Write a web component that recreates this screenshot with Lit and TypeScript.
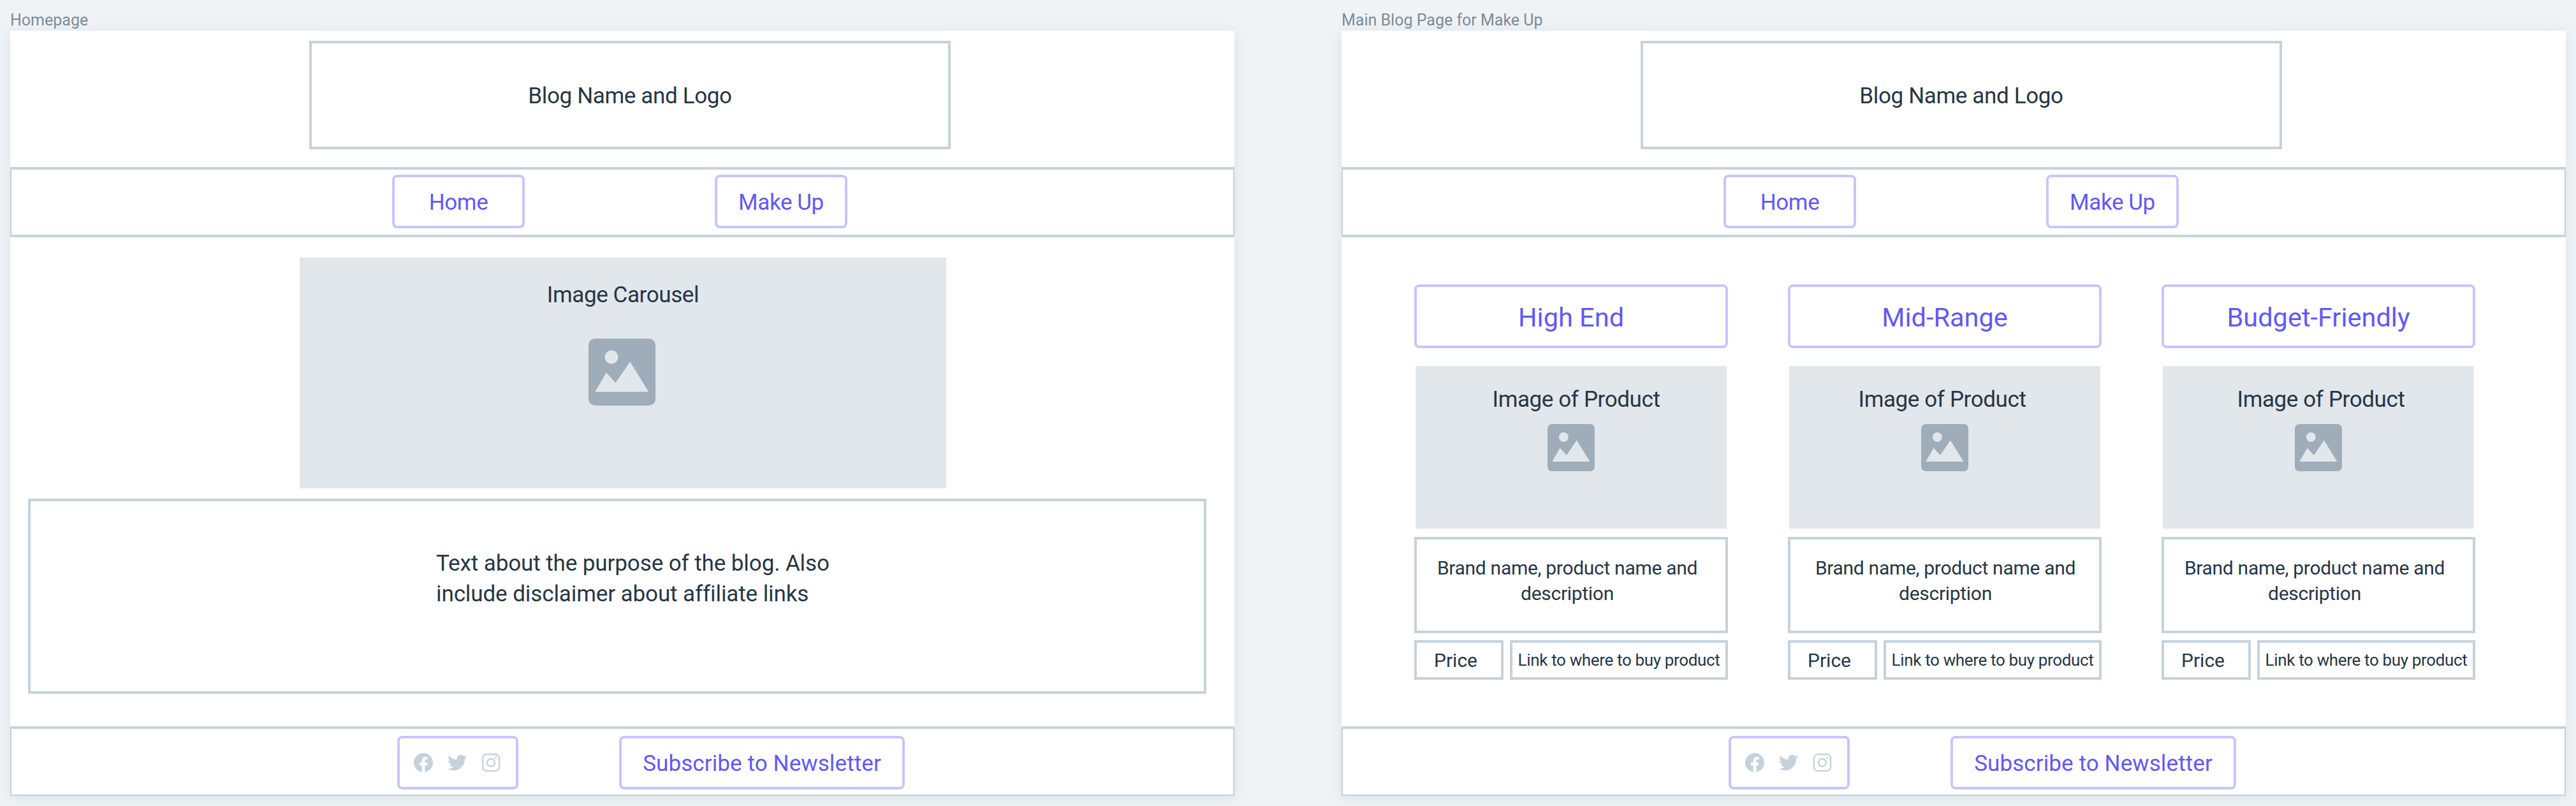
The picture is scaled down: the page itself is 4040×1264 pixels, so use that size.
import { LitElement, html, css, svg } from 'lit';
import { customElement } from 'lit/decorators.js';

interface Column {
  title: string;
  imageShift: number;
  brandShift: number;
}

const COLUMNS: Column[] = [
  { title: 'High End', imageShift: 16, brandShift: -12 },
  { title: 'Mid-Range', imageShift: -8, brandShift: 2 },
  { title: 'Budget-Friendly', imageShift: 8, brandShift: -12 },
];

const placeholderIcon = (size: number) => html`
  <svg class="placeholder" width=${size} height=${size} viewBox="0 0 105 105">
    <rect width="105" height="105" rx="10" fill="#9fadba"></rect>
    <circle cx="36" cy="29" r="10.5" fill="#e2e7eb"></circle>
    <path d="M11 83 28 54 42.5 70 65 37 93.5 83Z" fill="#e2e7eb" stroke="#e2e7eb" stroke-width="1" stroke-linejoin="round"></path>
  </svg>
`;

const facebook = svg`<path d="M24 12.073c0-6.627-5.373-12-12-12s-12 5.373-12 12c0 5.99 4.388 10.954 10.125 11.854v-8.385H7.078v-3.47h3.047V9.43c0-3.007 1.792-4.669 4.533-4.669 1.312 0 2.686.235 2.686.235v2.953H15.83c-1.491 0-1.956.925-1.956 1.874v2.25h3.328l-.532 3.47h-2.796v8.385C19.612 23.027 24 18.062 24 12.073z"></path>`;
const twitter = svg`<path d="M23.953 4.57a10 10 0 01-2.825.775 4.958 4.958 0 002.163-2.723c-.951.555-2.005.959-3.127 1.184a4.92 4.92 0 00-8.384 4.482C7.69 8.095 4.067 6.13 1.64 3.162a4.822 4.822 0 00-.666 2.475c0 1.71.87 3.213 2.188 4.096a4.904 4.904 0 01-2.228-.616v.06a4.923 4.923 0 003.946 4.827 4.996 4.996 0 01-2.212.085 4.936 4.936 0 004.604 3.417 9.867 9.867 0 01-6.102 2.105c-.39 0-.779-.023-1.17-.067a13.995 13.995 0 007.557 2.209c9.053 0 13.998-7.496 13.998-13.985 0-.21 0-.42-.015-.63A9.935 9.935 0 0024 4.59z"></path>`;

@customElement('app-root')
export class AppRoot extends LitElement {
  static styles = css`
    :host {
      display: block;
      width: 4040px;
      height: 1264px;
      overflow: hidden;
      background: #eff3f6;
      font-family: 'Roboto', 'Liberation Sans', sans-serif;
      color: #263645;
    }
    * { box-sizing: border-box; }
    .canvas {
      display: flex;
      gap: 168px;
      padding: 16px 16px 0;
    }
    .frame-label {
      height: 32px;
      font-size: 25px;
      line-height: 32px;
      color: #7c8b98;
    }
    .frame {
      display: flex;
      flex-direction: column;
      width: 1920px;
      height: 1200px;
      background: #fff;
      box-shadow: 0 4px 20px rgba(120, 135, 150, 0.16);
    }
    .logo-row {
      height: 214px;
      padding: 16px 0 0 469px;
    }
    .logo {
      display: flex;
      align-items: center;
      justify-content: center;
      width: 1006px;
      height: 170px;
      padding-top: 2px;
      font-size: 35px;
      letter-spacing: -0.35px;
    }
    .line {
      border: 4px solid #c5d2dc;
    }
    .bar {
      display: flex;
      border: solid #c5d2dc;
      border-width: 4px 2px;
    }
    .nav {
      height: 110px;
      gap: 298px;
      padding: 8px 0 0 597px;
    }
    .footer {
      height: 109px;
      gap: 158px;
      padding: 11px 0 0 605px;
      border-bottom-width: 2px;
    }
    .btn {
      display: flex;
      align-items: center;
      justify-content: center;
      height: 84px;
      padding-top: 2px;
      border: 4px solid #c8c5fb;
      border-radius: 8px;
      color: #6258f6;
      font-size: 35px;
      letter-spacing: -0.4px;
    }
    .home { width: 208px; }
    .social { width: 190px; gap: 23px; padding: 0 3px 0 0; color: #c5d2dc; }
    .social svg { fill: currentColor; display: block; }
    .subscribe { width: 448px; letter-spacing: 0.1px; }
    .content {
      flex: 1;
      min-height: 0;
    }
    .carousel {
      display: flex;
      flex-direction: column;
      align-items: center;
      width: 1014px;
      height: 362px;
      margin: 32px 0 0 454px;
      padding-top: 37px;
      background: #e2e7eb;
      font-size: 35px;
      letter-spacing: -0.4px;
      line-height: 44px;
    }
    .carousel .placeholder {
      margin: 46px 4px 0 0;
    }
    .about {
      width: 1848px;
      height: 306px;
      margin: 16px 0 0 28px;
      padding: 74px 0 0 636px;
      font-size: 35px;
      letter-spacing: -0.1px;
      line-height: 48px;
    }
    .columns {
      display: flex;
      gap: 94px;
      padding: 74px 0 0 114px;
    }
    .column {
      display: flex;
      flex-direction: column;
      width: 492px;
    }
    .col-head {
      height: 100px;
      font-size: 41.5px;
      letter-spacing: 0;
    }
    .product-image {
      display: flex;
      flex-direction: column;
      align-items: center;
      height: 255px;
      margin: 28px 2px 0;
      padding-top: 31px;
      background: #e2e7eb;
      font-size: 35px;
      letter-spacing: -0.4px;
      line-height: 44px;
    }
    .product-image .placeholder {
      margin-top: 16px;
    }
    .brand {
      height: 151px;
      margin-top: 13px;
      padding-top: 25px;
      font-size: 30px;
      letter-spacing: -0.3px;
      line-height: 40px;
      text-align: center;
    }
    .buy {
      display: flex;
      gap: 10px;
      height: 62px;
      margin-top: 11px;
    }
    .buy .line {
      display: flex;
      align-items: center;
      justify-content: center;
    }
    .price { width: 140px; padding-right: 10px; font-size: 30px; }
    .link { flex: 1; font-size: 26px; letter-spacing: -0.35px; white-space: nowrap; }
  `;

  private renderHeader() {
    return html`
      <div class="logo-row"><div class="logo line">Blog Name and Logo</div></div>
      <div class="bar nav">
        <div class="btn home">Home</div>
        <div class="btn home">Make Up</div>
      </div>
    `;
  }

  private renderFooter() {
    return html`
      <div class="bar footer">
        <div class="btn social">
          <svg width="30" height="30" viewBox="0 0 24 24">${facebook}</svg>
          <svg width="30" height="30" viewBox="0 0 24 24">${twitter}</svg>
          <svg width="30" height="30" viewBox="0 0 30 30">
            <rect x="2" y="2" width="26" height="26" rx="6" fill="none" stroke="currentColor" stroke-width="2.4"></rect>
            <circle cx="15" cy="15" r="6" fill="none" stroke="currentColor" stroke-width="2.4"></circle>
            <circle cx="22.5" cy="7.5" r="1.6"></circle>
          </svg>
        </div>
        <div class="btn subscribe">Subscribe to Newsletter</div>
      </div>
    `;
  }

  private renderColumn(col: Column) {
    return html`
      <div class="column">
        <div class="btn col-head">${col.title}</div>
        <div class="product-image">
          <span style="margin-left:${col.imageShift}px">Image of Product</span>
          ${placeholderIcon(74)}
        </div>
        <div class="brand line">
          <div style="margin-left:${col.brandShift}px">Brand name, product name and<br />description</div>
        </div>
        <div class="buy">
          <div class="price line">Price</div>
          <div class="link line">Link to where to buy product</div>
        </div>
      </div>
    `;
  }

  render() {
    return html`
      <div class="canvas">
        <section>
          <div class="frame-label">Homepage</div>
          <div class="frame">
            ${this.renderHeader()}
            <div class="content">
              <div class="carousel">
                <span>Image Carousel</span>
                ${placeholderIcon(105)}
              </div>
              <div class="about line">
                Text about the purpose of the blog. Also<br />
                include disclaimer about affiliate links
              </div>
            </div>
            ${this.renderFooter()}
          </div>
        </section>
        <section>
          <div class="frame-label">Main Blog Page for Make Up</div>
          <div class="frame">
            ${this.renderHeader()}
            <div class="content">
              <div class="columns">${COLUMNS.map((col) => this.renderColumn(col))}</div>
            </div>
            ${this.renderFooter()}
          </div>
        </section>
      </div>
    `;
  }
}

declare global {
  interface HTMLElementTagNameMap {
    'app-root': AppRoot;
  }
}
